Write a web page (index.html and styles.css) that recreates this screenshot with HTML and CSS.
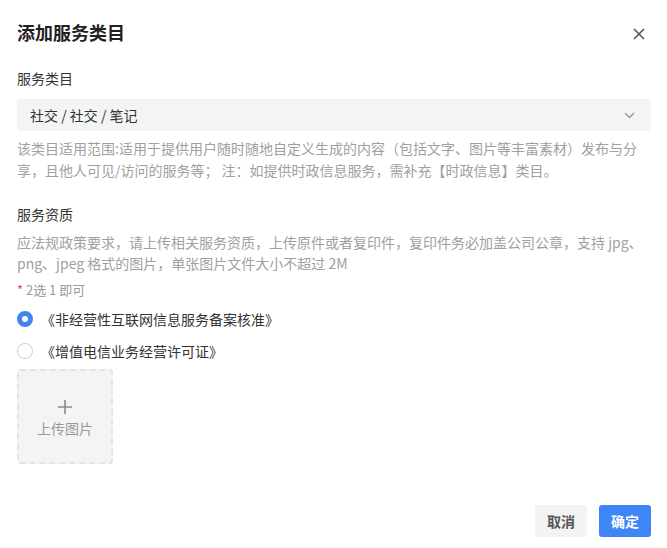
FILE: index.html
```html
<!DOCTYPE html>
<html lang="zh-CN">
<head>
<meta charset="utf-8">
<title>添加服务类目</title>
<link rel="stylesheet" href="styles.css">
</head>
<body>
<div class="dialog">
  <div class="header">
    <h1 class="title">添加服务类目</h1>
    <span class="close" aria-label="关闭">
      <svg width="12" height="12" viewBox="0 0 12 12"><path d="M1 1L11 11M11 1L1 11" stroke="#555" stroke-width="1.6" fill="none"/></svg>
    </span>
  </div>

  <div class="label first">服务类目</div>
  <div class="select">
    <span class="select-text">社交 / 社交 / 笔记</span>
    <svg class="chevron" width="11" height="7" viewBox="0 0 11 7"><path d="M1 1L5.5 5.5L10 1" stroke="#9a9a9a" stroke-width="1.5" fill="none"/></svg>
  </div>
  <p class="desc desc-a">该类目适用范围:适用于提供用户随时随地自定义生成的内容（包括文字、图片等丰富素材）发布与分<br>享，且他人可见/访问的服务等； 注：如提供时政信息服务，需补充【时政信息】类目。</p>

  <div class="label second">服务资质</div>
  <p class="desc desc-b">应法规政策要求，请上传相关服务资质，上传原件或者复印件，复印件务必加盖公司公章，支持 jpg、<br>png、jpeg 格式的图片，单张图片文件大小不超过 2M</p>
  <div class="hint"><span class="star">*</span> 2选 1 即可</div>

  <div class="radios">
    <label class="radio-row"><span class="radio checked"></span><span class="radio-text">《非经营性互联网信息服务备案核准》</span></label>
    <label class="radio-row"><span class="radio"></span><span class="radio-text">《增值电信业务经营许可证》</span></label>
  </div>

  <div class="upload">
    <svg class="plus" width="14" height="14" viewBox="0 0 14 14"><path d="M7 0V14M0 7H14" stroke="#8a8a8a" stroke-width="1.6"/></svg>
    <span class="upload-text">上传图片</span>
  </div>

  <div class="footer">
    <button class="btn btn-cancel">取消</button>
    <button class="btn btn-ok">确定</button>
  </div>
</div>
</body>
</html>
```
FILE: styles.css
```css
* { box-sizing: border-box; }
html, body { margin: 0; padding: 0; background: #fff; }
body {
  font-family: "Noto Sans CJK SC", "Noto Sans", sans-serif;
  font-size: 14px;
  color: #333;
}
.dialog {
  width: 667px;
  height: 548px;
  padding: 20px 16px 0 17px;
  display: flex;
  flex-direction: column;
}
.header {
  display: flex;
  align-items: center;
  justify-content: space-between;
  height: 24px;
}
.title {
  margin: 0;
  font-size: 18px;
  font-weight: 700;
  line-height: 24px;
  color: #1f2124;
}
.close {
  display: flex;
  width: 12px;
  height: 12px;
  margin-right: 6px;
  margin-top: 3px;
}
.label {
  line-height: 22px;
  color: #333;
}
.label.first { margin-top: 23px; }
.label.second { margin-top: 22px; }
.select {
  margin-top: 10px;
  height: 32px;
  background: #f3f4f4;
  border-radius: 3px;
  display: flex;
  align-items: center;
  justify-content: space-between;
  padding: 0 16px 0 13px;
}
.select-text { color: #333; line-height: 20px; }
.chevron { display: block; }
.desc {
  margin: 0;
  color: #a0a0a0;
  line-height: 22px;
}
.desc-a { margin-top: 6px; }
.desc-b { margin-top: 7px; line-height: 21px; }
.hint {
  margin-top: 6px;
  font-size: 13px;
  line-height: 20px;
  color: #9a9a9a;
}
.star { color: #f04c4c; }
.radios {
  margin-top: 3px;
  display: flex;
  flex-direction: column;
}
.radio-row {
  display: flex;
  align-items: center;
  height: 32px;
}
.radio {
  width: 16px;
  height: 16px;
  border-radius: 50%;
  border: 1px solid #cfcfcf;
  background: #fff;
  flex: none;
}
.radio.checked {
  border: 5px solid #3e86f6;
  background: #fff;
}
.radio-text {
  margin-left: 8px;
  color: #333;
  line-height: 20px;
}
.upload {
  margin-top: 2px;
  width: 96px;
  height: 95px;
  background: #f3f4f4;
  border: 2px dashed #e3e4e4;
  border-radius: 3px;
  display: flex;
  flex-direction: column;
  align-items: center;
  justify-content: center;
}
.plus { display: block; margin-top: 4px; }
.upload-text {
  margin-top: 4px;
  color: #999;
  line-height: 20px;
}
.footer {
  margin-top: 41px;
  display: flex;
  justify-content: flex-end;
  gap: 12px;
}
.btn {
  width: 52px;
  height: 32px;
  border: none;
  border-radius: 3px;
  font-family: inherit;
  font-size: 14px;
  font-weight: 700;
  padding: 0;
  cursor: pointer;
}
.btn-cancel { background: #f2f3f3; color: #555; }
.btn-ok { background: #3e86f6; color: #fff; }
```
